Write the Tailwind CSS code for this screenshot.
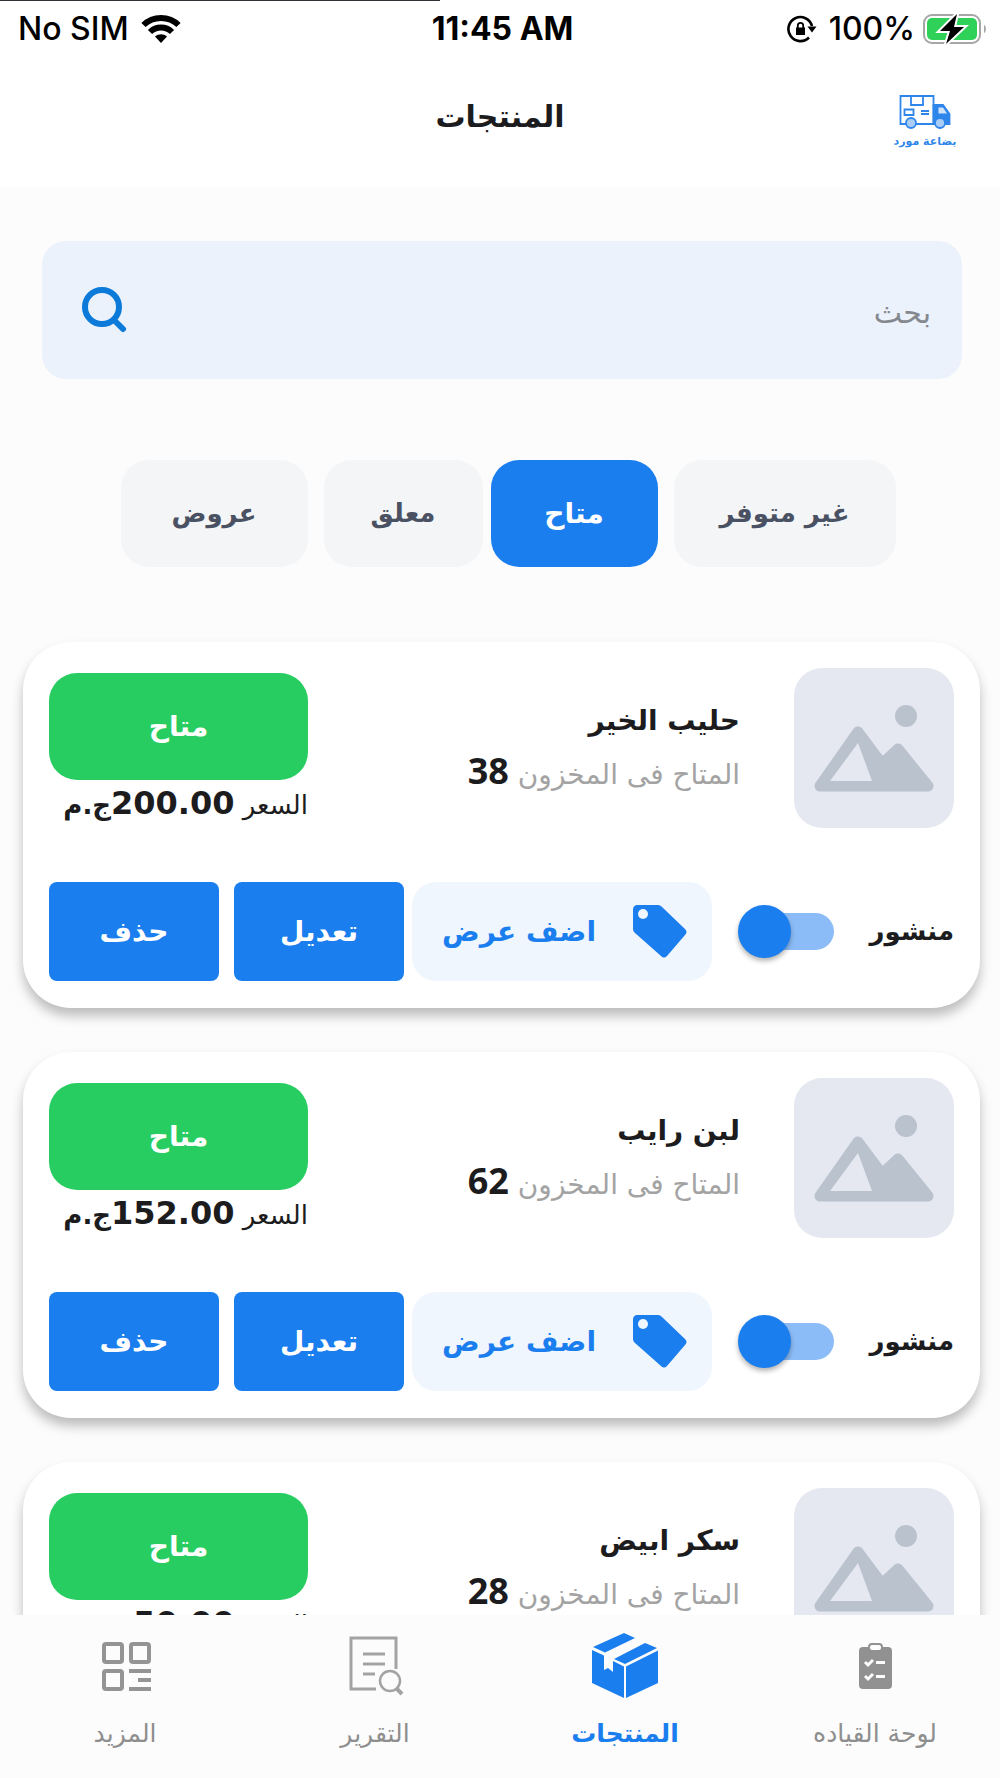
<!DOCTYPE html>
<html lang="ar" dir="rtl">
<head>
    <meta charset="UTF-8">
    <meta name="viewport" content="width=device-width, initial-scale=1.0">
    <title>المنتجات</title>
    <script src="https://cdn.jsdelivr.net/npm/@tailwindcss/browser@4"></script>
</head>
<body class="bg-[#fcfcfc] text-[#1c1c1e] font-['DejaVu_Sans',sans-serif] h-screen flex flex-col overflow-hidden">

<header class="bg-white h-[186px] shrink-0">
    <div class="h-px w-[44%] mr-auto bg-[#2f3136]"></div>

    <!-- status bar -->
    <div dir="ltr" class="grid grid-cols-3 items-center h-14 pl-[18px] pr-[13px] text-black text-[32px] leading-none font-['Inter',sans-serif]">
        <div class="flex items-center gap-3 font-medium">
            <span>No SIM</span>
            <svg class="w-10 h-[30px]" viewBox="0 0 40 30" fill="none" stroke="#000" stroke-width="6">
                <path d="M2.500 11C12 1.500 28 1.500 37.500 11"/>
                <path d="M9 18C15 12 25 12 31 18"/>
                <path d="M20 29l-6-6.500c3.500-3 8.500-3 12 0z" fill="#000" stroke="none"/>
            </svg>
        </div>
        <div class="text-center font-bold">11:45 AM</div>
        <div class="flex items-center justify-end gap-2 font-medium">
            <svg class="w-[30px] h-7 mr-1" viewBox="0 0 30 28" fill="none" stroke="#000" stroke-width="2.600">
                <path d="M25 11A12 12 0 1 0 22 22.500"/>
                <path d="M20.500 11.500h9l-4.500 6z" fill="#000" stroke="none"/>
                <path d="M9 12.500h9v7.500h-9z" fill="#000" stroke="none"/>
                <path d="M10.800 13v-2.500a2.700 2.700 0 0 1 5.400 0V13" stroke-width="1.800"/>
            </svg>
            <span>100%</span>
            <svg class="w-16 h-8" viewBox="0 0 64 32" fill="none">
                <rect x="1" y="2" width="56" height="28" rx="8" stroke="#a6a6a6" stroke-width="2"/>
                <rect x="4" y="5" width="50" height="22" rx="5" fill="#30d158"/>
                <path d="M34 1L17 18h10l-4 13 18-17H31z" fill="#000" stroke="#fff" stroke-width="4" paint-order="stroke"/>
                <path d="M61 12c2.500 1 2.500 7 0 8z" fill="#a6a6a6"/>
            </svg>
        </div>
    </div>

    <!-- title bar -->
    <div class="grid grid-cols-3 items-start h-[129px] pt-9 px-10">
        <div class="w-[70px] flex flex-col items-center text-[#2f86ea]">
            <svg class="w-[52px] h-[36px] mt-px" viewBox="0 0 52 36" fill="none" stroke="currentColor" stroke-width="1.800">
                <path d="M7 30H1.500V2h33v28H17"/>
                <path d="M12 2v9h12V2"/>
                <path d="M5.500 15.500h9v5.500h-9zM22 17h8M22 20h8"/>
                <path d="M34.500 11H44l6.500 9v10H34.500z" fill="currentColor"/>
                <path d="M39.500 13.500H44l4 6h-8.500z" fill="#cfe3fb" stroke="none"/>
                <circle cx="12" cy="29" r="5" fill="#a9cdf7"/>
                <circle cx="41" cy="29" r="5" fill="#a9cdf7"/>
                <path d="M17 30h19"/>
            </svg>
            <span class="text-[11px] leading-4 font-bold whitespace-nowrap mt-1">بضاعة مورد</span>
        </div>
        <h1 class="text-center text-[30px] leading-[48px] font-bold">المنتجات</h1>
    </div>
</header>

<main class="flex-1 min-h-0 overflow-hidden">
    <form class="mx-[38px] ml-[42px] mt-[55px] h-[138px] rounded-3xl bg-[#ebf2fb] flex items-center pr-[31px] pl-[39px]">
        <input type="search" aria-label="بحث" placeholder="بحث" class="flex-1 min-w-0 pt-1 bg-transparent outline-none text-[30px] placeholder:text-[#85898f]">
        <button type="button" aria-label="بحث" class="text-[#0b7ad9]">
            <svg class="w-[46px] h-[46px]" viewBox="0 0 46 46" fill="none" stroke="currentColor" stroke-width="6" stroke-linecap="round">
                <circle cx="21" cy="20" r="17"/>
                <path d="M34 34l8 8"/>
            </svg>
        </button>
    </form>

    <div class="flex justify-center gap-4 mt-[81px] pl-4 text-[26px] font-bold text-[#4a5163]">
        <button class="h-[107px] w-[222px] rounded-[28px] bg-[#f3f5f7]">غير متوفر</button>
        <button class="h-[107px] w-[167px] -ml-2 rounded-[28px] bg-[#1b7eee] text-white text-[28px]">متاح</button>
        <button class="h-[107px] w-[159px] rounded-[28px] bg-[#f3f5f7]">معلق</button>
        <button class="h-[107px] w-[187px] rounded-[28px] bg-[#f3f5f7]">عروض</button>
    </div>

    <div id="products" class="flex flex-col gap-11 mt-[75px] pl-[23px] pr-5"></div>
</main>

<nav class="shrink-0 h-[163px] bg-[#fcfcfc] grid grid-cols-4 text-[25px] text-[#8e8e8e]">
    <a href="#" class="flex flex-col items-center pt-[18px] gap-4">
        <svg class="w-[66px] h-[66px]" viewBox="0 0 66 66">
            <rect x="17" y="14" width="33" height="42" rx="4" fill="#919191"/>
            <rect x="27" y="11" width="13" height="7" rx="3" fill="#fcfcfc" stroke="#919191" stroke-width="2"/>
            <path d="M23 29l3 3 5-5M23 43l3 3 5-5M34 29.500h9M34 43.500h9" fill="none" stroke="#fcfcfc" stroke-width="3"/>
        </svg>
        <span>لوحة القياده</span>
    </a>
    <a href="#" class="flex flex-col items-center pt-[18px] gap-4 text-[#1b7eee] font-bold">
        <svg class="w-[66px] h-[66px]" viewBox="0 0 66 66" fill="#1b7eee">
            <path d="M32 0L1 14l12 5.500L43 5z"/>
            <path d="M53 10L65 15 33 31 22 26z"/>
            <path d="M0 17l12 5.500V37l4-2 5 4V28l11 5.500V65L0 50z"/>
            <path d="M34 33.500L66 17.500V50L34 65z"/>
        </svg>
        <span>المنتجات</span>
    </a>
    <a href="#" class="flex flex-col items-center pt-[18px] gap-4">
        <svg class="w-[66px] h-[66px]" viewBox="0 0 66 66" fill="none" stroke="#a3a3a3" stroke-width="3">
            <path d="M34 56H9V5h45v31"/>
            <path d="M21 21h22M21 31h22M21 41h12"/>
            <circle cx="48" cy="48" r="10" stroke-width="2.500"/>
            <path d="M54 55l6 6" stroke-width="4"/>
        </svg>
        <span>التقرير</span>
    </a>
    <a href="#" class="flex flex-col items-center pt-[18px] gap-4">
        <svg class="w-[66px] h-[66px]" viewBox="0 0 66 66" fill="none" stroke="#949494" stroke-width="4">
            <rect x="12" y="11" width="18" height="18" rx="2"/>
            <rect x="39" y="11" width="18" height="18" rx="2"/>
            <rect x="12" y="38" width="18" height="18" rx="2"/>
            <path d="M37 38h22M46 47h13M37 56h22"/>
        </svg>
        <span>المزيد</span>
    </a>
</nav>

<script>
    const products = [
        { name: "حليب الخير", stock: 38, price: "200.00" },
        { name: "لبن رايب", stock: 62, price: "152.00" },
        { name: "سكر ابيض", stock: 28, price: "50.00" }
    ];

    document.getElementById("products").innerHTML = products.map((p, i) => `
        <article class="bg-white rounded-[48px] px-[26px] pt-[26px] pb-[27px] shadow-[0_8px_12px_rgba(0,0,0,0.25)]">
            <div class="flex h-[214px]">
                <svg class="w-40 h-40 shrink-0" viewBox="0 0 160 160">
                    <rect width="160" height="160" rx="28" fill="#e5e8f1"/>
                    <circle cx="112" cy="48" r="11" fill="#b9c2cd"/>
                    <path d="M26 118L64 64l24 32 16-15 30 37z" fill="#b9c2cd" stroke="#b9c2cd" stroke-width="11" stroke-linejoin="round"/>
                    <path d="M36 113L64 75l14 38z" fill="#e5e8f1"/>
                </svg>
                <div class="flex-1 pr-[54px] pt-7">
                    <h2 class="text-[28px] leading-[50px] font-bold">${p.name}</h2>
                    <p class="text-[28px] leading-[50px] text-[#a3a3a3]">المتاح فى المخزون <b class="text-[36px] text-[#1c1c1e] font-['Noto_Sans',sans-serif]">${p.stock}</b></p>
                </div>
                <div class="w-[259px] pt-[5px]">
                    <div class="h-[107px] rounded-[28px] bg-[#27cd61] text-white text-[28px] font-bold flex items-center justify-center">متاح</div>
                    <p class="text-[26px] leading-[46px] whitespace-nowrap">السعر <b><span class="text-[32px]">${p.price}</span>ج.م</b></p>
                </div>
            </div>
            <div class="flex items-center h-[99px] text-[28px] font-bold">
                <label for="pub${i}" class="w-[120px] text-[26px] whitespace-nowrap">منشور</label>
                <input id="pub${i}" type="checkbox" role="switch" checked class="appearance-none relative shrink-0 w-[76px] h-[37px] rounded-full bg-[#8cbcf7] before:absolute before:-left-5 before:-top-2 before:size-[53px] before:rounded-full before:bg-[#1b7eee] before:shadow-[0_3px_5px_rgba(0,0,0,0.3)]">
                <button class="h-full w-[300px] mr-auto rounded-3xl bg-[#eff6fe] text-[#1b7eee] whitespace-nowrap flex items-center pr-6 gap-9">
                    <svg class="w-14 h-14 shrink-0" viewBox="0 0 56 56" fill="#1b7eee">
                        <path d="M5 1h21c2 0 3 1 4 2l23 22c2 2 2 4 0 6L35 52c-2 2-4 2-6 0L3 29c-2-2-2-3-2-5V5c0-2 2-4 4-4z"/>
                        <circle cx="11" cy="10" r="5" fill="#eff6fe"/>
                    </svg>
                    اضف عرض
                </button>
                <button class="h-full w-[170px] mr-2 rounded-lg bg-[#1b7eee] text-white">تعديل</button>
                <button class="h-full w-[170px] mr-[15px] rounded-lg bg-[#1b7eee] text-white">حذف</button>
            </div>
        </article>
    `).join("");
</script>
</body>
</html>
